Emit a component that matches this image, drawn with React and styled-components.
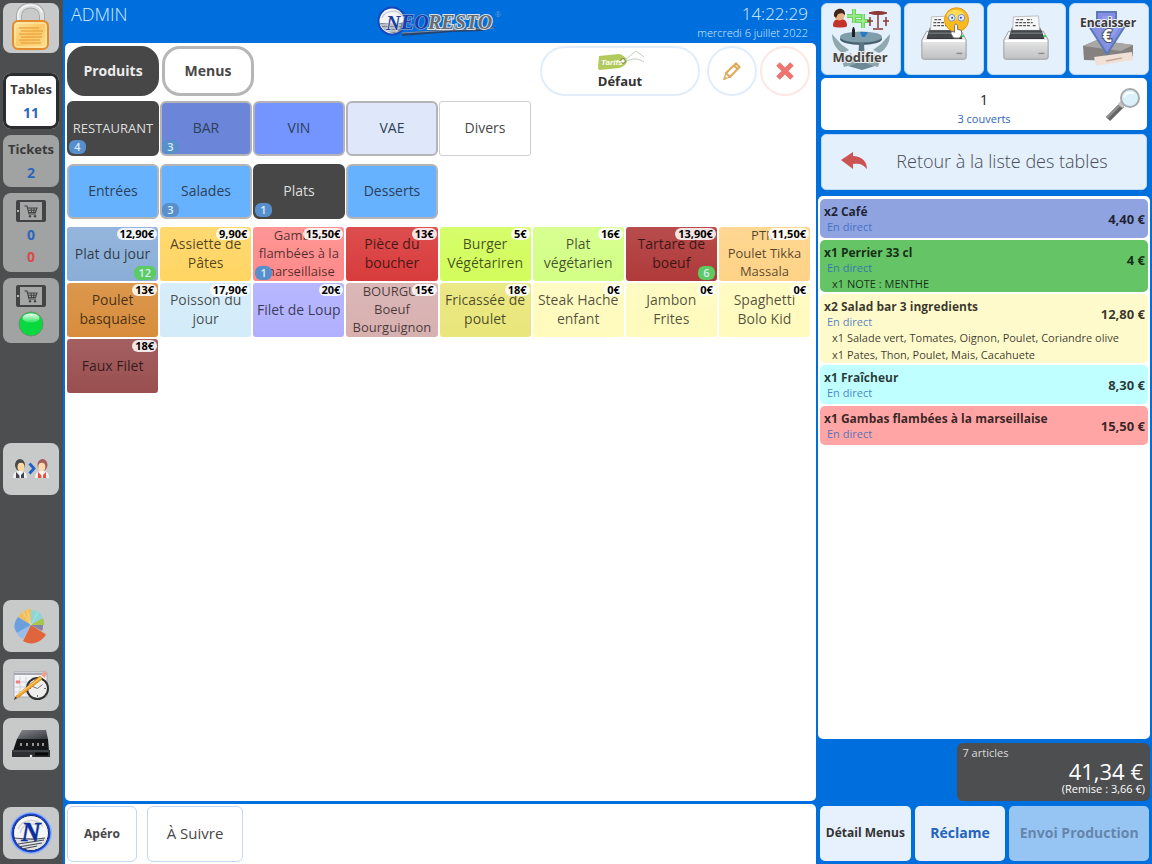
import React from 'react';
import styled, { createGlobalStyle, css } from 'styled-components';

const categories = [
  { name: 'RESTAURANT', color: '#474747', active: true, small: true, count: 4 },
  { name: 'BAR', color: '#6b85d9', count: 3 },
  { name: 'VIN', color: '#7495ff' },
  { name: 'VAE', color: '#dfe7fa' },
  { name: 'Divers', color: '#ffffff', plain: true },
];

const subCategories = [
  { name: 'Entrées', color: '#66b2ff' },
  { name: 'Salades', color: '#66b2ff', count: 3 },
  { name: 'Plats', color: '#474747', active: true, count: 1 },
  { name: 'Desserts', color: '#66b2ff' },
];

const products = [
  { name: 'Plat du jour', price: '12,90€', color: '#8aaed8', stock: 12 },
  { name: 'Assiette de\nPâtes', price: '9,90€', color: '#ffd563' },
  { name: 'Gambas\nflambées à la\nmarseillaise', price: '15,50€', color: '#ff8a8a', small: true, count: 1 },
  { name: 'Pièce du\nboucher', price: '13€', color: '#d93c3c' },
  { name: 'Burger\nVégétariren', price: '5€', color: '#d2fd5c' },
  { name: 'Plat\nvégétarien', price: '16€', color: '#d3ff86' },
  { name: 'Tartare de\nboeuf', price: '13,90€', color: '#b03a3a', stock: 6 },
  { name: 'PTM\nPoulet Tikka\nMassala', price: '11,50€', color: '#ffd387', small: true },
  { name: 'Poulet\nbasquaise', price: '13€', color: '#d88d3c' },
  { name: 'Poisson du\njour', price: '17,90€', color: '#d3ecf9' },
  { name: 'Filet de Loup', price: '20€', color: '#b0b0ff' },
  { name: 'BOURGUI\nBoeuf\nBourguignon', price: '15€', color: '#d8b0b0', small: true },
  { name: 'Fricassée de\npoulet', price: '18€', color: '#e9e67a' },
  { name: 'Steak Haché\nenfant', price: '0€', color: '#fffbbd' },
  { name: 'Jambon\nFrites', price: '0€', color: '#fffbbd' },
  { name: 'Spaghetti\nBolo Kid', price: '0€', color: '#fffbbd' },
  { name: 'Faux Filet', price: '18€', color: '#9a4f50' },
];

const order = [
  { name: 'x2 Café', price: '4,40 €', color: '#90a3e1' },
  { name: 'x1 Perrier 33 cl', price: '4 €', color: '#65c466', notes: ['x1 NOTE : MENTHE'] },
  {
    name: 'x2 Salad bar 3 ingredients',
    price: '12,80 €',
    color: '#fffacb',
    notes: ['x1 Salade vert, Tomates, Oignon, Poulet, Coriandre olive', 'x1 Pates, Thon, Poulet, Mais, Cacahuete'],
  },
  { name: 'x1 Fraîcheur', price: '8,30 €', color: '#bfffff' },
  { name: 'x1 Gambas flambées à la marseillaise', price: '15,50 €', color: '#ffa5a5' },
];

const LockIcon = () => (
  <svg width="42" height="50" viewBox="0 0 42 50">
    <defs>
      <linearGradient id="gold" x1="0" y1="0" x2="1" y2="1">
        <stop offset="0" stopColor="#ffe7a0" />
        <stop offset=".5" stopColor="#fbc765" />
        <stop offset="1" stopColor="#ffe08d" />
      </linearGradient>
    </defs>
    <path d="M9 20V13C9-1 32-1 32 13v7" fill="none" stroke="#a6a8a8" strokeWidth="6" />
    <path d="M9 20V13C9-1 32-1 32 13v7" fill="none" stroke="#dcdfe0" strokeWidth="4" />
    <path d="M8 19v-6C8 0 30-2 32 10" fill="none" stroke="#f8fafa" strokeWidth="1.200" />
    <rect x="3" y="18" width="35" height="28" rx="5" fill="url(#gold)" stroke="#e58a2c" strokeWidth="2" />
    <rect x="5" y="20" width="31" height="24" rx="3" fill="none" stroke="#fff0b8" />
    <path d="M9 25h20M11 28h22M9 31h23M11 34h21M9 37h21M11 40h20" stroke="#eda945" strokeWidth="1.3" />
  </svg>
);

const TabletIcon = () => (
  <svg width="30" height="22" viewBox="0 0 30 22">
    <rect width="30" height="22" rx="2" fill="#424345" />
    <rect x="4" y="2" width="22" height="18" fill="#a4a5a5" />
    <circle cx="2" cy="11" r="1" fill="#ddd" />
    <path d="M8.500 6h2.500l2 8h7M11.500 8h9.500l-1.500 4.500h-7M12 10.200h8M15 8l.5 4M18 8l-.3 4" fill="none" stroke="#454545" strokeWidth="1.1" />
    <circle cx="14" cy="16.200" r="1.200" fill="#454545" />
    <circle cx="19" cy="16.200" r="1.200" fill="#454545" />
  </svg>
);

const GreenLight = () => (
  <svg width="26" height="26" viewBox="0 0 26 26">
    <defs>
      <linearGradient id="shine" x1="0" y1="0" x2="0" y2="1">
        <stop offset="0" stopColor="#f4fff4" />
        <stop offset="1" stopColor="#2be35e" />
      </linearGradient>
    </defs>
    <circle cx="13" cy="13" r="12" fill="#09d93f" stroke="#6c8f72" strokeWidth="1" />
    <ellipse cx="13" cy="7" rx="8.500" ry="4.500" fill="url(#shine)" />
  </svg>
);

const WaitersIcon = () => (
  <svg width="38" height="22" viewBox="0 0 38 22">
    <path d="M1 20c0-5 2-6 5-7h4c3 1 5 2 5 7z" fill="#eef0f2" />
    <path d="M4 14l4 4 4-4v6H4z" fill="#43435a" />
    <path d="M7.500 13h1.500v7H7.500z" fill="#fff" />
    <ellipse cx="8" cy="7" rx="5" ry="6" fill="#4a4a4a" />
    <ellipse cx="9" cy="9" rx="3.500" ry="4.200" fill="#ffd9a4" />
    <path d="M17.500 5.500l4.500 5-4.500 5" fill="none" stroke="#2063c8" strokeWidth="2.800" />
    <path d="M23 20c0-5 2-6 5-7h4c3 1 5 2 5 7z" fill="#eef0f2" />
    <path d="M26 14l4 4 4-4v6h-8z" fill="#ee4f3d" />
    <path d="M29.500 13H31v7h-1.500z" fill="#fff" />
    <ellipse cx="30.500" cy="7" rx="5" ry="6" fill="#a35c5c" />
    <ellipse cx="29.800" cy="9" rx="3.500" ry="4.200" fill="#ffd9b0" />
  </svg>
);

const PieIcon = () => (
  <svg width="34" height="36" viewBox="0 0 34 36">
    <path d="M17 17L4 9.500C7 4 11 1 17 1z" fill="#f0c060" />
    <path d="M17 17V2c6 0 10 3 12 8z" fill="#8fd5d7" />
    <path d="M17 17l12-7c1 2 1.500 4 1 7z" fill="#a8c64c" />
    <path d="M17 17h12c0 2 0 4-1 6z" fill="#8684a8" />
    <path d="M17 17L4 9C0 14-1 20 3 25z" fill="#6b9fdd" />
    <path d="M17 17L3 25c1 3 3 5 6 6z" fill="#97bdec" />
    <path d="M17 17l15 9.500C27 35 17 38 9 33z" fill="#e0653c" />
    <path d="M17 17L9 4M17 17L13 2M17 17L24 4" stroke="#ffffff66" strokeWidth=".7" />
  </svg>
);

const PlanningIcon = () => (
  <svg width="36" height="32" viewBox="0 0 36 32">
    <rect x="1" y="3" width="33" height="25" rx="1" fill="#f4f4f8" stroke="#a9a9b4" />
    <path d="M1 5h33" stroke="#a8a8b2" strokeWidth="2" />
    <path d="M7 8v19M13 8v19M19 8v19M25 8v19M1 13h32M1 18h32M1 23h32" stroke="#d0d0dd" />
    <path d="M3 13h4" stroke="#f08080" strokeWidth="3" />
    <circle cx="24.500" cy="19.500" r="10.500" fill="#eeeeec" stroke="#303030" strokeWidth="2" />
    <path d="M24.500 19.500l-5-2M24.500 19.500l5-4M24.500 11v2M24.500 26v2M16 19.500h2M31 19.500h2" stroke="#777" />
    <path d="M2 30l2-4L27 7l2 3L6 28z" fill="#f5a623" stroke="#c77c14" strokeWidth=".7" />
    <path d="M4 26L28 8.500" stroke="#ffd98a" strokeWidth="1" />
    <path d="M28 6l3-4 3 2-2 5z" fill="#f0a090" />
    <path d="M1 31l1-3 2 1z" fill="#333" />
  </svg>
);

const DrawerIcon = () => (
  <svg width="38" height="30" viewBox="0 0 38 30">
    <defs>
      <linearGradient id="steel" x1="0" y1="0" x2="1" y2="1">
        <stop offset="0" stopColor="#84898f" />
        <stop offset="1" stopColor="#34373a" />
      </linearGradient>
    </defs>
    <path d="M10 1h24l2 9H5z" fill="url(#steel)" />
    <path d="M5 10h31l1 12H1z" fill="#141516" />
    <path d="M9 14v3M15 14v3M21 14v3M26 14v3M31 14v3" stroke="#d8d8d8" strokeWidth="1.300" />
    <path d="M0 21h38v7H0z" fill="#2c2e31" />
    <path d="M0 22h37" stroke="#565a5e" />
    <path d="M23 25h13" stroke="#090909" strokeWidth="3" />
    <circle cx="19" cy="27" r="1.300" fill="#eee" />
  </svg>
);

const RoundLogo = () => (
  <svg width="44" height="44" viewBox="0 0 44 44">
    <circle cx="22" cy="22" r="21" fill="#8fb0ff" />
    <circle cx="22" cy="22" r="19.500" fill="#1644d2" />
    <circle cx="22" cy="22" r="17.500" fill="#f6f6f6" stroke="#132b62" />
    <path d="M9 18C13 8 29 6 34 16M11 22C13 12 27 10 31 18" fill="none" stroke="#d4d4d4" strokeWidth="1.500" />
    <path d="M6 27h32c-2 14-27 17-32 0z" fill="#dfe1e4" />
    <path d="M5 27c10 1 22 2 31 0M9 33l26-4M9 36l24-4M13 38l15-3" fill="none" stroke="#4a4e55" strokeWidth="1.200" />
    <text x="22" y="30" textAnchor="middle" fontFamily="Liberation Serif, serif" fontSize="27" fontStyle="italic" fontWeight="bold" fill="#0b2f9f" stroke="#0b2f9f" strokeWidth=".5">N</text>
  </svg>
);

const Brand = () => (
  <svg width="128" height="34" viewBox="0 0 128 34" role="img" aria-label="NeoResto">
    <circle cx="16" cy="18" r="14.500" fill="#1747b8" />
    <circle cx="16" cy="18" r="12.500" fill="#f5f5f5" />
    <path d="M6 15C9 7 22 6 26 13" fill="none" stroke="#c9cdd2" strokeWidth="1.500" />
    <path d="M4 20c5 0 16 2 24-1 1 15-20 14-24 1z" fill="#7d858d" />
    <path d="M5 22h20M7 25h17M11 28h11" stroke="#f5f5f5" />
    <path d="M26 30l60-5 34-1-14 4-30 1-50 4z" fill="#26446e" />
    <path d="M26 30l50-3 42-2" stroke="#7f90a8" fill="none" />
    <g fontFamily="Liberation Serif, serif" fontStyle="italic" fontWeight="bold" paintOrder="stroke">
      <text x="10" y="27" fontSize="20" fill="#1d3f9c" stroke="#eef" strokeWidth="1">N</text>
      <text x="25" y="26" fontSize="20" fill="#1740ae" stroke="#7f9fd0" strokeWidth="1.500">EO</text>
      <text x="52" y="26" fontSize="20" fill="#666c72" stroke="#dde2e6" strokeWidth="2">RESTO</text>
    </g>
    <text x="119" y="14" fontSize="7" fontFamily="Open Sans, sans-serif" fill="#8ba9cf">®</text>
  </svg>
);

const TagIcon = () => (
  <svg width="50" height="22" viewBox="0 0 50 22">
    <path d="M4 5l20-2c3 0 8 4 8 7s-5 7-8 7L5 19c-1 0-2-1-2-2z" fill="#b1ca5b" />
    <circle cx="28" cy="10" r="2.300" fill="#fff" stroke="#6d7c37" />
    <path d="M30 9l11-9 8 6M32 10c5-2 9-4 17 1" fill="none" stroke="#bfd0bb" />
    <text x="6" y="14" fontFamily="Liberation Sans, sans-serif" fontSize="8" fontStyle="italic" fontWeight="bold" fill="#fff">Tarifs</text>
  </svg>
);

const PencilIcon = () => (
  <svg width="20" height="20" viewBox="0 0 20 20" fill="none" stroke="#e0a95a" strokeWidth="2">
    <path d="M4 12L14 2.500 17.500 6 8 16z" />
    <path d="M12 4.500l3.500 3.500" />
    <path d="M4 12l-2 6 6-2" strokeWidth="1.300" />
    <path d="M2 18l2-1" />
  </svg>
);

const CrossIcon = () => (
  <svg width="20" height="20" viewBox="0 0 20 20">
    <path d="M3 3l14 14M17 3L3 17" stroke="#ee756f" strokeWidth="5" />
  </svg>
);

const TableScene = () => (
  <svg width="60" height="62" viewBox="0 0 60 62">
    <path d="M2 18c0-6 3-7 7-7s7 1 7 7c0 2-14 2-14 0z" fill="#c4322c" />
    <circle cx="8.500" cy="7.500" r="5" fill="#e7b384" />
    <path d="M3 8c-1-9 12-10 11-1l-3-2-4 1-2 4z" fill="#422519" />
    <path d="M23 1v14M16 8h14M32 6v14M25 13h14" stroke="#6cd35c" strokeWidth="4" />
    <path d="M23 1v14M16 8h14M32 6v14M25 13h14" stroke="#a1ef92" strokeWidth="1.500" />
    <path d="M38 5c5-2 13-2 18 0-5 2-13 2-18 0z" fill="#8d3834" stroke="#8d3834" />
    <path d="M47 6v14M42 21h10M39 9v9M55 9v9M36 13h6M52 13h6" stroke="#8d3834" strokeWidth="1.500" />
    <path d="M1 26l9 10 8 6-6 3C5 42 1 34 1 26zM59 26l-9 10-8 6 6 3c7-3 11-11 11-19z" fill="#90a8af" />
    <ellipse cx="30" cy="31" rx="21" ry="6" fill="#46616c" />
    <ellipse cx="30" cy="29" rx="21" ry="5.500" fill="#7f9dab" />
    <path d="M28 35h5l1 20-3 3-4-3z" fill="#587684" />
    <path d="M17 58l10-4h7l10 4-13 4z" fill="#6b8894" />
    <path d="M10 50l10-5 4 11-11 3zM50 50l-10-5-4 11 11 3z" fill="#8fa5ac" />
    <path d="M21 29v-7l1-3h1l1 3v7z" fill="#222" />
    <path d="M29 24h8l-3 5h-3z" fill="#277bc4" />
    <text x="29" y="54" textAnchor="middle" fontFamily="Open Sans, sans-serif" fontSize="13" fontWeight="bold" fill="#454545" stroke="#eee" strokeWidth="2" paintOrder="stroke">Modifier</text>
  </svg>
);

const PrinterIcon = ({ silent }) => (
  <svg width="52" height="52" viewBox="0 3 54 54" overflow="visible">
    <defs>
      <linearGradient id="paperTray" x1="0" y1="0" x2="0" y2="1">
        <stop offset="0" stopColor="#909496" />
        <stop offset="1" stopColor="#303335" />
      </linearGradient>
      <linearGradient id="caseBody" x1="0" y1="0" x2="0" y2="1">
        <stop offset="0" stopColor="#fafafa" />
        <stop offset="1" stopColor="#bfc0c1" />
      </linearGradient>
    </defs>
    <path d="M9 22h36l5 9v18q0 2-2 2H6q-2 0-2-2V31z" fill="url(#caseBody)" stroke="#9a9c9e" />
    <path d="M12 18h30l4 12H9z" fill="url(#paperTray)" />
    <path d="M14 7l26-1 1 15H13z" fill="#f8f8f8" stroke="#a5a5a5" strokeWidth=".7" />
    <path d="M17 10h8M28 10h5M16 13h18M16 16h15M34 16h4" stroke="#555" strokeWidth="1.300" strokeDasharray="3 1" />
    <path d="M12 21h31l3 8H9z" fill="#44484a" />
    <path d="M11 24h33" stroke="#6d7274" strokeWidth="1.500" />
    <path d="M5 32h44" stroke="#fff" strokeWidth="2" />
    <path d="M40 45h6" stroke="#8c8c8c" strokeWidth="1.500" />
    <path d="M45 27h3" stroke="#36d556" strokeWidth="2" />
    {silent && (
      <g transform="translate(0 -2)">
        <circle cx="40" cy="12" r="12.500" fill="#fbbb1c" stroke="#df9510" />
        <ellipse cx="39" cy="7" rx="9" ry="5" fill="#ffdc55" />
        <circle cx="35" cy="10" r="3.500" fill="#dbe8ff" stroke="#8092c0" />
        <circle cx="45" cy="10" r="3.500" fill="#dbe8ff" stroke="#8092c0" />
        <circle cx="35.500" cy="10" r="1" fill="#2447a0" />
        <circle cx="44.500" cy="10" r="1" fill="#2447a0" />
        <path d="M37 31l-3-5 1-2 3 1v-7c0-2 3-2 3 0v4l4 1c1 4 0 6-2 8z" fill="#fff" stroke="#6d6d6d" />
      </g>
    )}
  </svg>
);

const CashIcon = () => (
  <svg width="62" height="62" viewBox="0 -5 62 62">
    <path d="M5 33l14-6 36 5v11l-10 5L6 47z" fill="#85817f" />
    <path d="M5 33l14-6 36 5-12 6z" fill="#aaa6a3" />
    <path d="M16 44l38-5 1 8-37 6z" fill="#f0e1d8" />
    <path d="M28 48l16-3" stroke="#c8a698" strokeWidth="1.500" />
    <path d="M19-1h19v11h11L29 41 9 10h10z" fill="#8390e3" stroke="#5b79b5" strokeWidth="2" />
    <path d="M24 3h11v12h6L29 33z" fill="#9da9f3" opacity=".6" />
    <text x="30" y="14" textAnchor="middle" fontFamily="Open Sans, sans-serif" fontSize="12" fontWeight="bold" fill="#383838" stroke="#eef3fa" strokeWidth="2" paintOrder="stroke">Encaisser</text>
    <text x="29" y="29" textAnchor="middle" fontFamily="Open Sans, sans-serif" fontSize="17" fontWeight="bold" fill="#fff" stroke="#4c5260" strokeWidth="2" paintOrder="stroke">€</text>
  </svg>
);

const MagnifierIcon = () => (
  <svg width="36" height="36" viewBox="0 0 36 36">
    <path d="M17 18L3 32" stroke="#666" strokeWidth="6" />
    <path d="M16 17L2 31" stroke="#929292" strokeWidth="2" />
    <path d="M20 14l-5 5" stroke="#c5c5c5" strokeWidth="6" />
    <circle cx="25" cy="11" r="9" fill="#daf0fb" stroke="#a7a9aa" strokeWidth="2" />
    <path d="M19 10c2-5 7-5 10-3" stroke="#fff" strokeWidth="2" fill="none" />
  </svg>
);

const BackIcon = () => (
  <svg width="28" height="20" viewBox="0 0 28 20">
    <path d="M1 9L13 1v4c8 0 14 5 14 13-4-5-8-6-14-5v5z" fill="#cb5452" />
  </svg>
);

const App = () => {
  return (
    <>
      <GlobalStyle />
      <Screen>
        <Sidebar>
          <SideButton $height="50px" aria-label="Verrouiller"><LockIcon /></SideButton>
          <SideGroup $top="20px" $gap="6px">
            <SideButton $height="56px" $active>
              <SideLabel>Tables</SideLabel>
              <SideCount>11</SideCount>
            </SideButton>
            <SideButton $height="52px" $muted>
              <SideLabel>Tickets</SideLabel>
              <SideCount>2</SideCount>
            </SideButton>
            <SideButton $height="79px" $muted>
              <TabletIcon />
              <SideCount>0</SideCount>
              <SideCount $red>0</SideCount>
            </SideButton>
            <SideButton $height="65px" $muted>
              <TabletIcon />
              <GreenLight />
            </SideButton>
          </SideGroup>
          <SideGroup $top="100px">
            <SideButton aria-label="Changer de serveur"><WaitersIcon /></SideButton>
          </SideGroup>
          <SideGroup $top="auto">
            <SideButton aria-label="Statistiques"><PieIcon /></SideButton>
            <SideButton aria-label="Planning"><PlanningIcon /></SideButton>
            <SideButton aria-label="Tiroir caisse"><DrawerIcon /></SideButton>
          </SideGroup>
          <SideGroup $top="37px">
            <SideButton aria-label="Accueil"><RoundLogo /></SideButton>
          </SideGroup>
        </Sidebar>

        <Main>
          <Header>
            <User>ADMIN</User>
            <Brand />
            <Clock>
              <Time>14:22:29</Time>
              <Day>mercredi 6 juillet 2022</Day>
            </Clock>
          </Header>
          <Catalog>
            <Toolbar>
              <Tab $active>Produits</Tab>
              <Tab>Menus</Tab>
              <RateButton>
                <TagIcon />
                Défaut
              </RateButton>
              <RoundButton aria-label="Éditer"><PencilIcon /></RoundButton>
              <RoundButton $danger aria-label="Fermer"><CrossIcon /></RoundButton>
            </Toolbar>
            <CategoryGrid>
              {categories.map((item) => (
                <Category key={item.name} $color={item.color} $active={item.active} $plain={item.plain} $small={item.small}>
                  {item.name}
                  {item.count && <CountBadge>{item.count}</CountBadge>}
                </Category>
              ))}
            </CategoryGrid>
            <CategoryGrid>
              {subCategories.map((item) => (
                <Category key={item.name} $color={item.color} $active={item.active}>
                  {item.name}
                  {item.count && <CountBadge>{item.count}</CountBadge>}
                </Category>
              ))}
            </CategoryGrid>
            <ProductGrid>
              {products.map((item) => (
                <Product key={item.name} $color={item.color} $small={item.small}>
                  {item.name}
                  <PriceBadge>{item.price}</PriceBadge>
                  {item.count && <CountBadge>{item.count}</CountBadge>}
                  {item.stock && <StockBadge>{item.stock}</StockBadge>}
                </Product>
              ))}
            </ProductGrid>
          </Catalog>
          <Footer>
            <FooterButton $bold>Apéro</FooterButton>
            <FooterButton>À Suivre</FooterButton>
          </Footer>
        </Main>

        <Ticket>
          <ActionRow>
            <Action><TableScene /></Action>
            <Action aria-label="Imprimer sans prix"><PrinterIcon silent /></Action>
            <Action aria-label="Imprimer"><PrinterIcon /></Action>
            <Action><CashIcon /></Action>
          </ActionRow>
          <TableInfo>
            <div>
              <TableNumber>1</TableNumber>
              <Covers>3 couverts</Covers>
            </div>
            <SearchButton aria-label="Rechercher"><MagnifierIcon /></SearchButton>
          </TableInfo>
          <BackButton>
            <BackIcon />
            <span>Retour à la liste des tables</span>
          </BackButton>
          <OrderList>
            {order.map((line) => (
              <OrderLine key={line.name} $color={line.color}>
                <LineHead>
                  <div>
                    <LineName>{line.name}</LineName>
                    <LineMode>En direct</LineMode>
                  </div>
                  <LinePrice>{line.price}</LinePrice>
                </LineHead>
                {line.notes && line.notes.map((note) => <LineNote key={note}>{note}</LineNote>)}
              </OrderLine>
            ))}
          </OrderList>
          <Total>
            <Articles>7 articles</Articles>
            <Amount>41,34 €</Amount>
            <Discount>(Remise : 3,66 €)</Discount>
          </Total>
          <SendRow>
            <SendButton>Détail Menus</SendButton>
            <SendButton $primary>Réclame</SendButton>
            <SendButton $primary disabled>Envoi Production</SendButton>
          </SendRow>
        </Ticket>
      </Screen>
    </>
  );
};

const GlobalStyle = createGlobalStyle`
  * {
    box-sizing: border-box;
  }

  body {
    margin: 0;
    background: #006fde;
    font-family: "Open Sans", "Noto Sans", sans-serif;
  }

  button {
    font-family: inherit;
    padding: 0;
    border: none;
    cursor: pointer;
  }

  svg {
    display: block;
    flex: none;
  }
`;

const center = css`
  display: flex;
  align-items: center;
  justify-content: center;
`;

const Screen = styled.div`
  display: grid;
  grid-template-columns: 63px minmax(0, 1fr) minmax(336px, 29%);
  min-height: 100vh;
`;

const Sidebar = styled.nav`
  display: flex;
  flex-direction: column;
  padding: 3px 3px 5px;
  background: #4d4e50;
`;

const SideGroup = styled.div`
  display: flex;
  flex-direction: column;
  gap: ${({ $gap }) => $gap || '7px'};
  margin-top: ${({ $top }) => $top};
`;

const SideButton = styled.button`
  ${center}
  flex-direction: column;
  width: 56px;
  height: ${({ $height }) => $height || '52px'};
  gap: 4px;
  border-radius: 8px;
  background: ${({ $muted }) => ($muted ? '#a1a2a2' : '#c8c9c9')};

  ${({ $active }) => $active && css`
    background: #fff;
    box-shadow: inset 0 0 0 3px #2b2c30;
  `}
`;

const SideLabel = styled.span`
  margin-bottom: 2px;
  color: #3a3a3a;
  font-size: 13px;
  line-height: 18px;
  font-weight: 700;
`;

const SideCount = styled.span`
  color: ${({ $red }) => ($red ? '#d94a4a' : '#2c65be')};
  font-size: 14px;
  line-height: 18px;
  font-weight: 700;
`;

const Main = styled.main`
  display: flex;
  flex-direction: column;
  padding-left: 2px;
`;

const Header = styled.header`
  display: grid;
  grid-template-columns: 1fr auto 1fr;
  height: 43px;
  padding: 3px 8px 0 6px;
  color: #d9ebff;
  font-weight: 300;
`;

const User = styled.div`
  font-size: 18px;
  line-height: 22px;
`;

const Clock = styled.div`
  text-align: right;
`;

const Time = styled.div`
  font-size: 17px;
  line-height: 22px;
`;

const Day = styled.div`
  font-size: 11px;
  line-height: 16px;
`;

const Catalog = styled.section`
  flex: 1;
  display: flex;
  flex-direction: column;
  gap: 8px;
  padding: 3px 6px 3px 2px;
  border-radius: 5px;
  background: #fff;
`;

const Toolbar = styled.div`
  display: flex;
  gap: 3px;
  margin-bottom: -3px;
`;

const Tab = styled.button`
  width: 92px;
  height: 50px;
  padding-bottom: 2px;
  border-radius: 18px;
  border: 3px solid ${({ $active }) => ($active ? '#474747' : '#b6b6b6')};
  background: ${({ $active }) => ($active ? '#474747' : '#fff')};
  color: ${({ $active }) => ($active ? '#ececec' : '#474747')};
  font-size: 14px;
  font-weight: 700;
`;

const RateButton = styled.button`
  ${center}
  flex-direction: column;
  width: 160px;
  height: 50px;
  margin-left: auto;
  margin-right: 4px;
  padding-bottom: 2px;
  border: 2px solid #e1edf9;
  border-radius: 25px;
  background: #fff;
  color: #333;
  font-size: 13px;
  line-height: 17px;
  font-weight: 700;
`;

const RoundButton = styled.button`
  ${center}
  width: 50px;
  height: 50px;
  border: 2px solid ${({ $danger }) => ($danger ? '#fbe8e5' : '#e1edf9')};
  border-radius: 50%;
  background: #fff;
`;

const CategoryGrid = styled.div`
  display: grid;
  grid-template-columns: repeat(8, minmax(0, 1fr));
  gap: 1px;
`;

const Category = styled.button`
  position: relative;
  height: 55px;
  padding-bottom: 2px;
  border: 2px solid ${({ $active }) => ($active ? '#474747' : '#b4b4b6')};
  border-radius: 6px;
  background: ${({ $color }) => $color};
  color: ${({ $active }) => ($active ? '#dedede' : '#2e3f58')};
  font-size: ${({ $small }) => ($small ? '13px' : '14px')};

  ${({ $plain }) => $plain && css`
    border: 1px solid #d0d0d0;
    border-radius: 3px;
    color: #474747;
  `}
`;

const CountBadge = styled.span`
  position: absolute;
  left: 0;
  bottom: 0;
  width: 17px;
  height: 14px;
  border-radius: 6px;
  background: #578fcd;
  color: #dcebfa;
  font-size: 11px;
  line-height: 14px;
  font-weight: 600;
  text-align: center;
`;

const StockBadge = styled(CountBadge)`
  left: auto;
  right: 2px;
  bottom: 1px;
  width: auto;
  min-width: 17px;
  padding: 0 5px;
  background: #5bcb62;
`;

const ProductGrid = styled.div`
  display: grid;
  grid-template-columns: repeat(8, minmax(0, 1fr));
  gap: 2px;
`;

const Product = styled.button`
  position: relative;
  ${center}
  height: 54px;
  padding-bottom: 2px;
  border-radius: 3px;
  overflow: hidden;
  background: linear-gradient(to bottom, #ffffff18, transparent) ${({ $color }) => $color};
  color: #000000b0;
  font-size: ${({ $small }) => ($small ? '13px' : '14px')};
  line-height: ${({ $small }) => ($small ? '18px' : '19px')};
  white-space: pre;

  ${CountBadge} {
    left: 2px;
    bottom: 1px;
  }

  ${StockBadge} {
    left: auto;
  }
`;

const PriceBadge = styled.span`
  position: absolute;
  top: 1px;
  right: 1px;
  padding: 0 3px;
  border-radius: 6px;
  background: #ffffffd8;
  color: #000;
  font-size: 11px;
  line-height: 12px;
  font-weight: 700;
`;

const Footer = styled.footer`
  display: flex;
  gap: 10px;
  margin-top: 3px;
  padding: 2px;
  border-radius: 5px 5px 0 0;
  background: #fff;
`;

const FooterButton = styled.button`
  min-width: ${({ $bold }) => ($bold ? '70px' : '96px')};
  height: 56px;
  padding-bottom: 2px;
  border: 1px solid #c3d7f2;
  border-radius: 6px;
  background: #fff;
  color: #474747;
  font-size: ${({ $bold }) => ($bold ? '12px' : '15px')};
  font-weight: ${({ $bold }) => ($bold ? 700 : 400)};
`;

const Ticket = styled.aside`
  display: flex;
  flex-direction: column;
  padding: 3px 2px 3px;
`;

const ActionRow = styled.div`
  display: grid;
  grid-template-columns: repeat(4, 1fr);
  gap: 3px;
  padding: 0 1px 0 3px;
`;

const Action = styled.button`
  ${center}
  height: 72px;
  border: 1px solid #b9d9f8;
  border-radius: 6px;
  background: #e4f0fc;
`;

const TableInfo = styled.div`
  position: relative;
  ${center}
  height: 52px;
  margin: 3px 3px 4px;
  padding-top: 10px;
  border-radius: 5px;
  background: #fff;
  text-align: center;
`;

const TableNumber = styled.div`
  color: #222;
  font-size: 14px;
  line-height: 20px;
`;

const Covers = styled.div`
  color: #2c65be;
  font-size: 11px;
  line-height: 18px;
`;

const SearchButton = styled.button`
  position: absolute;
  right: 6px;
  top: 9px;
  background: none;
`;

const BackButton = styled.button`
  display: flex;
  align-items: center;
  height: 56px;
  margin: 0 3px 6px;
  padding: 0 10px 2px 18px;
  border: 1px solid #b9d9f8;
  border-radius: 5px;
  background: #e4f0fc;
  color: #474c57;
  font-size: 18px;
  font-weight: 300;

  span {
    flex: 1;
    text-align: center;
  }
`;

const OrderList = styled.section`
  flex: 1;
  display: flex;
  flex-direction: column;
  gap: 2px;
  padding: 3px 2px;
  border-radius: 5px;
  background: #fff;
`;

const OrderLine = styled.article`
  min-height: 39px;
  padding: 4px 3px 0 4px;
  border-radius: 5px;
  background: ${({ $color }) => $color};
  color: #000000c8;
`;

const LineHead = styled.div`
  display: flex;
  align-items: center;
  justify-content: space-between;
  height: 31px;
`;

const LineName = styled.div`
  font-size: 12px;
  line-height: 16px;
  font-weight: 700;
`;

const LineMode = styled.div`
  padding-left: 3px;
  color: #2c65bed0;
  font-size: 11px;
  line-height: 14px;
`;

const LinePrice = styled.div`
  font-size: 13px;
  line-height: 18px;
  font-weight: 700;
`;

const LineNote = styled.div`
  padding-left: 8px;
  font-size: 11px;
  line-height: 17px;
`;

const Total = styled.section`
  align-self: flex-end;
  width: 58%;
  height: 58px;
  margin: 4px 0 5px;
  padding: 2px 5px;
  border-radius: 6px;
  background: #4d4e50;
  color: #fff;
  text-align: right;
`;

const Articles = styled.div`
  color: #dcdcdc;
  font-size: 11px;
  line-height: 16px;
  text-align: left;
`;

const Amount = styled.div`
  padding-right: 2px;
  font-size: 22px;
  line-height: 20px;
`;

const Discount = styled.div`
  font-size: 11px;
  line-height: 16px;
`;

const SendRow = styled.div`
  display: grid;
  grid-template-columns: 91fr 91fr 140fr;
  gap: 4px;
  padding: 0 1px 0 2px;
`;

const SendButton = styled.button`
  height: 55px;
  padding-bottom: 2px;
  border-radius: 5px;
  background: #e6f1fd;
  color: ${({ $primary }) => ($primary ? '#2463bd' : '#333')};
  font-size: ${({ $primary }) => ($primary ? '14px' : '12px')};
  font-weight: 700;
  white-space: nowrap;

  &:disabled {
    background: #97c5f3;
    color: #6485ac;
  }
`;

export default App;
